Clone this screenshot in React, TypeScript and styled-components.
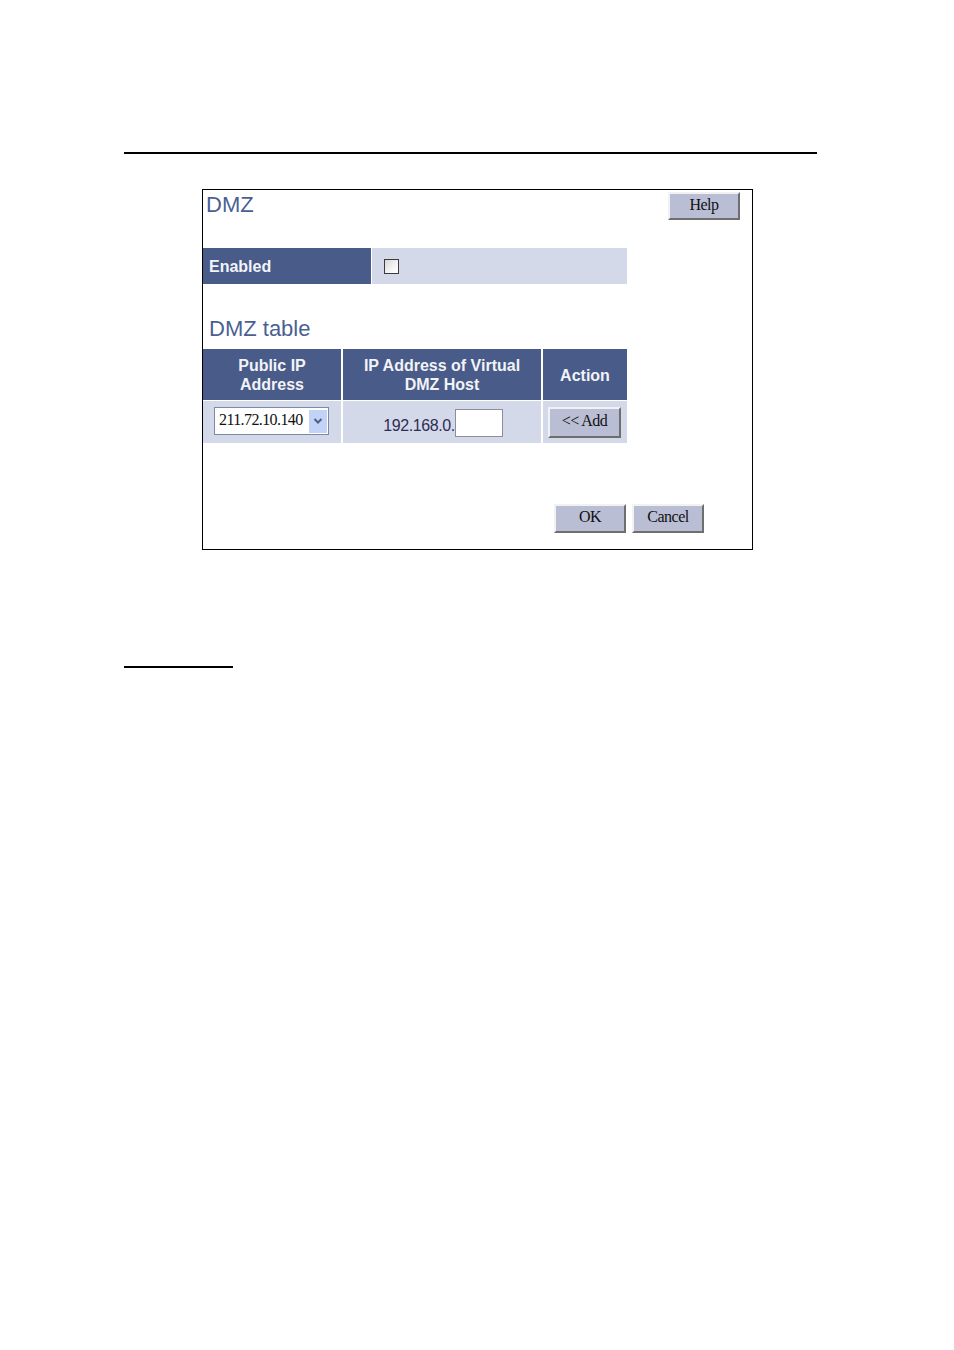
import React from "react";
import styled, { createGlobalStyle } from "styled-components";

const GlobalStyle = createGlobalStyle`
  html, body {
    margin: 0;
    padding: 0;
    background: #fff;
  }
  body {
    font-family: "Liberation Sans", Arial, sans-serif;
    width: 954px;
    min-height: 1350px;
  }
`;

const Page = styled.div`
  padding: 152px 0 0 124px;
  width: 693px;
`;

const Rule = styled.div<{ width: number }>`
  width: ${(p) => p.width}px;
  height: 2px;
  background: #000;
`;

const Frame = styled.div`
  box-sizing: border-box;
  margin: 35px 0 0 78px;
  width: 551px;
  height: 361px;
  border: 1px solid #000;
`;

const TopBar = styled.div`
  height: 58px;
  display: flex;
  justify-content: space-between;
  align-items: flex-start;
  padding: 0 12px 0 1px;
  box-sizing: border-box;
`;

const Title = styled.div<{ indent?: number; drop?: number }>`
  font-size: 22px;
  line-height: 26px;
  color: #4b5f94;
  padding-left: ${(p) => p.indent ?? 0}px;
  margin-top: ${(p) => p.drop ?? 0}px;
`;

const Btn = styled.button<{ w: number; h: number }>`
  box-sizing: border-box;
  width: ${(p) => p.w}px;
  height: ${(p) => p.h}px;
  margin: 0;
  padding: 0 0 3px;
  background: #babed5;
  border-style: solid;
  border-width: 2px;
  border-color: #f2f2f2 #6e6e6e #6e6e6e #f2f2f2;
  font-family: "Liberation Serif", "Times New Roman", serif;
  font-size: 16px;
  letter-spacing: -0.5px;
  color: #111;
  display: flex;
  align-items: center;
  justify-content: center;
`;

const HelpBtn = styled(Btn)`
  margin-top: 2px;
`;

const EnabledRow = styled.div`
  display: grid;
  grid-template-columns: 168px 255px;
  column-gap: 1px;
  height: 36px;
`;

const LabelCell = styled.div`
  background: #485b89;
  color: #f2f3f7;
  font-weight: bold;
  font-size: 16px;
  display: flex;
  align-items: center;
  padding: 1px 0 0 6px;
`;

const ValueCell = styled.div`
  background: #d4d9ea;
  display: flex;
  align-items: center;
  padding-left: 12px;
`;

const Check = styled.span`
  box-sizing: border-box;
  width: 15px;
  height: 15px;
  border: 1px solid #3b3b3b;
  background: linear-gradient(135deg, #d6d6d6 0%, #f4f4f4 60%, #ffffff 100%);
`;

const Section = styled.div`
  padding-top: 31px;
`;

const Table = styled.div`
  margin-top: 7px;
  display: grid;
  grid-template-columns: 138px 198px 84px;
  grid-template-rows: 51px 42px;
  column-gap: 2px;
  row-gap: 1px;
  width: 424px;
`;

const HeadCell = styled.div`
  background: #485b89;
  color: #f2f3f7;
  font-weight: bold;
  font-size: 16px;
  line-height: 19px;
  text-align: center;
  display: flex;
  align-items: center;
  justify-content: center;
  padding-top: 1px;
`;

const DataCell = styled.div<{ justify?: string; pad?: number }>`
  background: #d4d9ea;
  display: flex;
  align-items: center;
  justify-content: ${(p) => p.justify ?? "center"};
  padding-left: ${(p) => p.pad ?? 0}px;
`;

const Select = styled.div`
  box-sizing: border-box;
  width: 115px;
  height: 28px;
  margin-left: 9px;
  margin-bottom: 2px;
  border: 1px solid #7a8aa6;
  background: #fff;
  display: flex;
  align-items: center;
  justify-content: space-between;
  padding: 0 1px 2px 4px;
  font-family: "Liberation Serif", "Times New Roman", serif;
  font-size: 16px;
  letter-spacing: -0.6px;
  color: #111;
`;

const Arrow = styled.span`
  width: 18px;
  height: 23px;
  margin-top: 2px;
  background: #c3d3f7;
  display: flex;
  align-items: center;
  justify-content: center;
`;

const IpText = styled.span`
  font-size: 16px;
  letter-spacing: -0.4px;
  color: #2f2c55;
  margin-top: 7px;
`;

const IpInput = styled.span`
  box-sizing: border-box;
  width: 48px;
  height: 28px;
  border: 1px solid #8c8c9c;
  background: #fff;
  margin-top: 2px;
`;

const Footer = styled.div`
  margin-top: 61px;
  display: flex;
  justify-content: flex-end;
  gap: 6px;
  padding-right: 48px;
`;

export default function App() {
  return (
    <>
      <GlobalStyle />
      <Page>
        <Rule width={693} />
        <Frame>
          <TopBar>
            <Title indent={2} drop={2}>DMZ</Title>
            <HelpBtn w={72} h={28}>Help</HelpBtn>
          </TopBar>
          <EnabledRow>
            <LabelCell>Enabled</LabelCell>
            <ValueCell>
              <Check />
            </ValueCell>
          </EnabledRow>
          <Section>
            <Title indent={6} drop={1}>DMZ table</Title>
          </Section>
          <Table>
            <HeadCell>
              Public IP
              <br />
              Address
            </HeadCell>
            <HeadCell>
              IP Address of Virtual
              <br />
              DMZ Host
            </HeadCell>
            <HeadCell>Action</HeadCell>
            <DataCell justify="flex-start" pad={2}>
              <Select>
                211.72.10.140
                <Arrow>
                  <svg width="10" height="8" viewBox="0 0 10 8">
                    <path d="M1.5 2 L5 5.5 L8.5 2" fill="none" stroke="#4d6185" strokeWidth="2" />
                  </svg>
                </Arrow>
              </Select>
            </DataCell>
            <DataCell pad={2}>
              <IpText>192.168.0.</IpText>
              <IpInput />
            </DataCell>
            <DataCell justify="flex-start" pad={5}>
              <Btn w={73} h={31}>&lt;&lt; Add</Btn>
            </DataCell>
          </Table>
          <Footer>
            <Btn w={72} h={29}>OK</Btn>
            <Btn w={72} h={29}>Cancel</Btn>
          </Footer>
        </Frame>
        <Rule width={109} style={{ marginTop: 116 }} />
      </Page>
    </>
  );
}
